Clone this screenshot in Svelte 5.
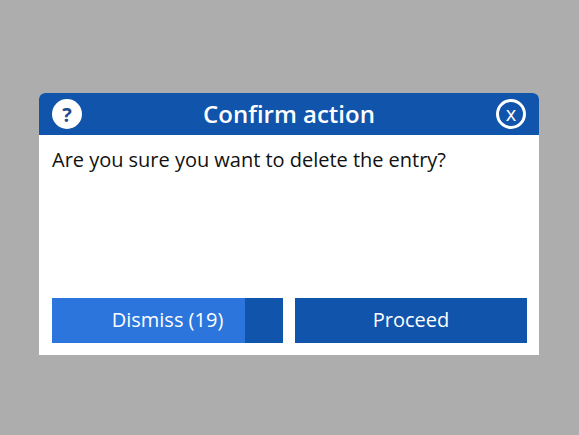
<script>
  let count = 19;
  let progress = 83.5;
</script>

<div class="overlay">
  <div class="dialog">
    <div class="header">
      <span class="help">?</span>
      <span class="title">Confirm action</span>
      <span class="close">x</span>
    </div>
    <div class="body">Are you sure you want to delete the entry?</div>
    <div class="footer">
      <button class="btn dismiss">
        <span class="bar" style="width: {progress}%"></span>
        <span class="label">Dismiss ({count})</span>
      </button>
      <button class="btn">
        <span class="label">Proceed</span>
      </button>
    </div>
  </div>
</div>

<style>
  :global(body) {
    margin: 0;
  }
  .overlay {
    width: 579px;
    height: 435px;
    box-sizing: border-box;
    padding: 93px 0 0 39px;
    background: #adadad;
    font-family: "Open Sans", sans-serif;
  }
  .dialog {
    width: 500px;
    height: 262px;
    display: flex;
    flex-direction: column;
    background: #fff;
    border-radius: 6px 6px 0 0;
    overflow: hidden;
  }
  .header {
    height: 42px;
    background: #1054ab;
    display: flex;
    align-items: center;
    justify-content: space-between;
    padding: 0 13px;
    flex-shrink: 0;
  }
  .title {
    color: #fff;
    font-size: 24px;
    font-weight: 600;
    padding-bottom: 2px;
  }
  .help {
    width: 30px;
    height: 30px;
    border-radius: 50%;
    background: #fff;
    color: #1d4b8f;
    font-size: 20px;
    font-weight: 700;
    display: flex;
    align-items: center;
    justify-content: center;
  }
  .close {
    width: 24px;
    height: 24px;
    border: 3px solid #fff;
    border-radius: 50%;
    color: #fff;
    font-size: 20px;
    line-height: 20px;
    display: flex;
    align-items: center;
    justify-content: center;
  }
  .body {
    flex: 1;
    padding: 11px 12px 0 13px;
    font-size: 20px;
    line-height: 28px;
    letter-spacing: -0.02px;
    color: #111;
  }
  .footer {
    display: flex;
    gap: 12px;
    padding: 0 12px 12px 13px;
  }
  .btn {
    position: relative;
    flex: 1;
    height: 45px;
    border: none;
    padding: 0 0 2px;
    background: #1054ab;
    color: #fff;
    font-family: inherit;
    font-size: 20px;
  }
  .dismiss {
    flex: 0 0 231px;
  }
  .bar {
    position: absolute;
    left: 0;
    top: 0;
    bottom: 0;
    background: #2b75dc;
  }
  .label {
    position: relative;
  }
</style>
